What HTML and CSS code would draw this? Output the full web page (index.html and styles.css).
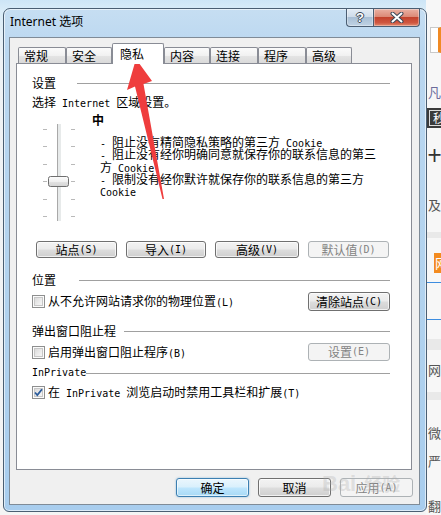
FILE: index.html
```html
<!DOCTYPE html>
<html lang="zh-CN">
<head>
<meta charset="utf-8">
<title>Internet 选项</title>
<link rel="stylesheet" href="styles.css">
</head>
<body>
<div class="desktop">
  <div class="site">
    <div class="s-box"></div>
    <div class="s-txt s-t1">凡库</div>
    <div class="s-dark"><span class="s-key">秒</span></div>
    <div class="s-txt s-t2">十</div>
    <div class="s-txt s-t3">及</div>
    <div class="s-band s-b1"></div>
    <div class="s-orange">网</div>
    <div class="s-line s-l1"></div>
    <div class="s-line s-l2"></div>
    <div class="s-band s-b2"></div>
    <div class="s-txt s-t4">网信</div>
    <div class="s-band s-b3"></div>
    <div class="s-txt s-t5">微</div>
    <div class="s-txt s-t6">严</div>
    <div class="s-txt s-t7">翻</div>
  </div>

  <div class="window">
    <div class="titlebar">
      <span class="title">Internet 选项</span>
      <div class="caption">
        <div class="cbtn help"><span class="qmark">?</span></div>
        <div class="cbtn close">
          <svg width="14" height="11" viewBox="0 0 14 11">
            <path d="M2.5 1.5 L11.5 9.5 M11.5 1.5 L2.5 9.5" stroke="#3a4656" stroke-width="4" stroke-linecap="round"/>
            <path d="M2.5 1.5 L11.5 9.5 M11.5 1.5 L2.5 9.5" stroke="#ffffff" stroke-width="2" stroke-linecap="round"/>
          </svg>
        </div>
      </div>
    </div>

    <div class="client">
      <div class="tabs">
        <div class="tab w48">常规</div>
        <div class="tab w46">安全</div>
        <div class="tab sel">隐私</div>
        <div class="tab w46">内容</div>
        <div class="tab w48">连接</div>
        <div class="tab w48">程序</div>
        <div class="tab w46">高级</div>
      </div>

      <div class="panel">
        <div class="group-h gh1"><span>设置</span><span class="rule"></span></div>
        <div class="zone">选择<span class="m"> Internet </span>区域设置。</div>
        <div class="level">中</div>
        <div class="privacy">
          <svg class="slider" width="68" height="97" viewBox="0 0 68 97">
            <g fill="#b9b9b9">
              <rect x="11" y="5" width="4" height="1"/><rect x="39" y="5" width="4" height="1"/>
              <rect x="11" y="22" width="4" height="1"/><rect x="39" y="22" width="4" height="1"/>
              <rect x="11" y="40" width="4" height="1"/><rect x="39" y="40" width="4" height="1"/>
              <rect x="11" y="57" width="4" height="1"/><rect x="39" y="57" width="4" height="1"/>
              <rect x="11" y="75" width="4" height="1"/><rect x="39" y="75" width="4" height="1"/>
              <rect x="11" y="92" width="4" height="1"/><rect x="39" y="92" width="4" height="1"/>
            </g>
            <rect x="25" y="0" width="4" height="97" fill="#e7eaea"/>
            <rect x="25" y="0" width="1" height="97" fill="#a9a9a9"/>
            <defs>
              <linearGradient id="thumb" x1="0" y1="0" x2="0" y2="1">
                <stop offset="0" stop-color="#fdfdfd"/>
                <stop offset="0.5" stop-color="#f0f0f0"/>
                <stop offset="0.55" stop-color="#e2e2e2"/>
                <stop offset="1" stop-color="#d4d4d4"/>
              </linearGradient>
            </defs>
            <rect x="16.5" y="52.5" width="20" height="10" rx="2" fill="url(#thumb)" stroke="#6f6f6f"/>
          </svg>
          <div class="desc">
            <div><span class="m">- </span>阻止没有精简隐私策略的第三方<span class="m"> Cookie</span></div>
            <div><span class="m">- </span>阻止没有经你明确同意就保存你的联系信息的第三</div>
            <div>方<span class="m"> Cookie</span></div>
            <div><span class="m">- </span>限制没有经你默许就保存你的联系信息的第三方</div>
            <div><span class="m">Cookie</span></div>
          </div>
        </div>

        <div class="btn-row">
          <div class="btn w81">站点<span class="m">(S)</span></div>
          <div class="btn w80">导入<span class="m">(I)</span></div>
          <div class="btn w84">高级<span class="m">(V)</span></div>
          <div class="btn w81 disabled">默认值<span class="m">(D)</span></div>
        </div>

        <div class="group-h gh2"><span>位置</span><span class="rule"></span></div>
        <div class="cb-row cr1">
          <span class="check"></span>
          <span class="cb-label">从不允许网站请求你的物理位置<span class="m">(L)</span></span>
          <div class="btn side h19">清除站点<span class="m">(C)</span></div>
        </div>

        <div class="group-h gh3"><span>弹出窗口阻止程</span><span class="rule"></span></div>
        <div class="cb-row cr2">
          <span class="check"></span>
          <span class="cb-label">启用弹出窗口阻止程序<span class="m">(B)</span></span>
          <div class="btn side h18 disabled">设置<span class="m">(E)</span></div>
        </div>

        <div class="group-h gh4"><span class="m">InPrivate</span><span class="rule"></span></div>
        <div class="cb-row cr3">
          <span class="check on">
            <svg width="11" height="11" viewBox="0 0 11 11"><path d="M2 5.5 L4.3 8 L9 2.2" fill="none" stroke="#2b5c9c" stroke-width="1.8"/></svg>
          </span>
          <span class="cb-label">在<span class="m"> InPrivate </span>浏览启动时禁用工具栏和扩展<span class="m">(T)</span></span>
        </div>
      </div>

      <div class="dlg-buttons">
        <div class="btn dbtn default">确定</div>
        <div class="btn dbtn">取消</div>
        <div class="btn dbtn disabled">应用<span class="m">(A)</span></div>
      </div>
    </div>
  </div>

  <svg class="arrow" width="441" height="515" viewBox="0 0 441 515">
    <polygon points="136,59 152,81 143.5,84 164,199 162.5,199 135,86.5 127,90" fill="#ef3d3d"/>
  </svg>
  <div class="watermark">Bai<span class="wm-cn">经验</span></div>
</div>
</body>
</html>
```

FILE: styles.css
```css
* { box-sizing: border-box; }
html, body { margin: 0; padding: 0; }
body {
  width: 441px;
  height: 515px;
  overflow: hidden;
  font-family: "Noto Sans CJK SC", sans-serif;
  font-size: 12px;
  color: #000;
}
.desktop {
  position: relative;
  width: 441px;
  height: 515px;
  overflow: hidden;
  background: linear-gradient(to bottom, #cde5f6 0, #d9ecf8 10px, #eef2f5 60px, #f4f4f4 100%);
}

/* background web page on the right */
.site {
  position: absolute;
  left: 426px;
  top: 0;
  width: 15px;
  height: 515px;
  background: #f7f7f7;
  display: flex;
  flex-direction: column;
  overflow: hidden;
}
.site > * { flex: none; }
.s-box { margin: 27px 0 0 4px; height: 26px; border: 1px solid #c9c9c9; border-right: 3px solid #f08a24; background: #fff; }
.s-txt { height: 14px; line-height: 14px; font-size: 13px; color: #555; padding-left: 2px; white-space: nowrap; }
.s-t1 { margin-top: 32px; color: #6b6b9b; }
.s-dark { margin-top: 9px; height: 20px; background: #3b3b3b; padding: 2px 0 0 3px; }
.s-key { display: block; width: 20px; height: 16px; border: 1px solid #ddd; color: #fff; font-size: 12px; line-height: 14px; padding-left: 3px; }
.s-t2 { margin-top: 20px; color: #333; font-weight: bold; }
.s-t3 { margin-top: 36px; }
.s-band { background: #e9e9e9; }
.s-b1 { margin-top: 20px; height: 6px; }
.s-orange { margin: 15px 0 0 8px; height: 20px; background: #f38b1f; color: #fff; font-size: 13px; line-height: 20px; padding-left: 1px; }
.s-line { height: 1px; background: #3d8de0; }
.s-l1 { margin-top: 9px; }
.s-l2 { margin-top: 36px; }
.s-b2 { margin-top: 19px; height: 11px; }
.s-t4 { margin-top: 13px; }
.s-b3 { margin-top: 15px; height: 8px; }
.s-t5 { margin-top: 26px; }
.s-t6 { margin-top: 14px; }
.s-t7 { margin-top: 31px; }

/* window */
.window {
  position: absolute;
  left: 3px;
  top: 8px;
  width: 424px;
  height: 504px;
  border: 1px solid #4a5e72;
  border-radius: 7px 7px 6px 6px;
  background: linear-gradient(to bottom, #c6def2 0%, #bad7f0 8%, #b1d2ee 60%, #a8cdee 100%);
  box-shadow: inset 0 0 0 1px rgba(255, 255, 255, 0.6);
  padding: 0 6px 6px 5px;
  display: flex;
  flex-direction: column;
}
.titlebar {
  height: 28px;
  flex: none;
  display: flex;
  justify-content: space-between;
  align-items: flex-start;
}
.title {
  font-family: "Noto Sans", "Noto Sans CJK SC", sans-serif;
  font-size: 12px;
  line-height: 14px;
  margin: 6px 0 0 1px;
  color: #000;
}
.caption { display: flex; }
.cbtn {
  height: 18px;
  border: 1px solid #4b5e73;
  border-top: none;
  display: flex;
  align-items: center;
  justify-content: center;
  box-shadow: inset 0 0 0 1px rgba(255, 255, 255, 0.35);
}
.help {
  width: 27px;
  border-right: none;
  border-bottom-left-radius: 4px;
  background: linear-gradient(to bottom, #e3ecf5 0%, #cfdcea 45%, #a9bfd5 50%, #bfd2e4 100%);
}
.qmark {
  color: #fff;
  font-family: "Liberation Sans", sans-serif;
  font-weight: bold;
  font-size: 13px;
  line-height: 13px;
  text-shadow: -1px 0 #3a4656, 1px 0 #3a4656, 0 -1px #3a4656, 0 1px #3a4656;
}
.close {
  width: 47px;
  border-bottom-right-radius: 4px;
  background: linear-gradient(to bottom, #eab1a3 0%, #dc8a77 45%, #c3432d 50%, #cf5640 80%, #e28a6e 100%);
}

/* client area */
.client {
  flex: 1;
  background: #f0f0f0;
  border: 1px solid #7f8b97;
  display: flex;
  flex-direction: column;
}
.tabs {
  height: 25px;
  flex: none;
  display: flex;
  align-items: flex-end;
  padding-left: 8px;
  position: relative;
  z-index: 1;
}
.tab {
  height: 16px;
  border: 1px solid #898c95;
  border-bottom: none;
  border-radius: 2px 2px 0 0;
  background: linear-gradient(to bottom, #fbfbfb 0%, #f1f1f1 50%, #e4e4e4 55%, #dadada 100%);
  padding-left: 5px;
  line-height: 15px;
  white-space: nowrap;
}
.w46 { width: 46px; }
.w48 { width: 48px; }
.tab.sel {
  width: 52px;
  height: 21px;
  margin-bottom: -1px;
  background: #fff;
  padding-left: 7px;
  line-height: 19px;
}

.panel {
  flex: none;
  width: 396px;
  height: 407px;
  margin-left: 6px;
  background: #fff;
  border: 1px solid #898c95;
  padding: 0 21px 0 15px;
  display: flex;
  flex-direction: column;
}

.m {
  font-family: "DejaVu Sans Mono", "Liberation Mono", monospace;
  font-size: 10px;
  line-height: 1;
}

.group-h {
  display: flex;
  align-items: center;
  height: 12px;
  line-height: 12px;
  flex: none;
  white-space: nowrap;
}
.group-h .rule {
  flex: 1;
  height: 1px;
  background: #a0a0a0;
  margin-top: 1px;
}
.gh1 { margin-top: 13px; }
.gh1 .rule { margin-left: 21px; }
.gh2 { margin-top: 16px; }
.gh2 .rule { margin-left: 23px; }
.gh3 { margin-top: 14px; }
.gh3 .rule { margin-left: 8px; }
.gh4 { margin-top: 6px; }
.gh4 .rule { margin-left: 0; }

.zone { margin-top: 7px; height: 12px; line-height: 12px; white-space: nowrap; }
.level { margin-top: 6px; height: 10px; line-height: 12px; padding-left: 60px; font-weight: bold; }

.privacy { display: flex; height: 97px; flex: none; }
.slider { flex: none; display: block; }
.desc { padding-top: 12px; line-height: 12.3px; white-space: nowrap; }
.desc > div { height: 12.3px; }

.btn {
  height: 17px;
  border: 1px solid #707070;
  border-radius: 3px;
  background: linear-gradient(to bottom, #f3f3f3 0%, #ebebeb 48%, #dddddd 52%, #cfcfcf 100%);
  box-shadow: inset 0 0 0 1px rgba(255, 255, 255, 0.7);
  display: flex;
  align-items: center;
  justify-content: center;
  line-height: 12px;
  white-space: nowrap;
  flex: none;
}
.btn.disabled {
  border-color: #adb2b5;
  background: #f4f4f4;
  color: #838383;
  box-shadow: none;
}
.btn-row { display: flex; gap: 9px; margin: 20px 0 0 4px; flex: none; }
.w80 { width: 80px; }
.w81 { width: 81px; }
.w84 { width: 84px; }

.cb-row { display: flex; align-items: center; flex: none; white-space: nowrap; line-height: 12px; }
.cr1 { margin-top: 6px; height: 19px; }
.cr2 { margin-top: 6px; height: 18px; }
.cr3 { margin-top: 7px; height: 13px; }
.check {
  width: 13px;
  height: 13px;
  flex: none;
  margin-right: 3px;
  border: 1px solid #8e8f8f;
  background: linear-gradient(135deg, #d2d2d2 0%, #eeeeee 60%, #fafafa 100%);
  box-shadow: inset 0 0 0 1px #fbfbfb, inset 0 0 0 2px #c7c7c7;
  display: flex;
  align-items: center;
  justify-content: center;
}
.check.on svg { display: block; }
.side { margin-left: auto; width: 82px; }
.h19 { height: 19px; }
.h18 { height: 18px; }

.dlg-buttons {
  display: flex;
  justify-content: flex-end;
  gap: 9px;
  margin: 8px 6px 0 0;
  flex: none;
}
.dbtn { width: 73px; height: 19px; }
.btn.default {
  border-color: #3c7fb1;
  background: linear-gradient(to bottom, #eaf6fd 0%, #d9f0fc 48%, #bee6fd 52%, #a7d9f5 100%);
  box-shadow: inset 0 0 0 1px rgba(255, 255, 255, 0.6), 0 0 2px rgba(60, 140, 200, 0.6);
}

/* overlays */
.arrow { position: absolute; left: 0; top: 0; pointer-events: none; }
.watermark {
  position: absolute;
  left: 322px;
  top: 470px;
  font-family: "Liberation Sans", sans-serif;
  font-weight: bold;
  font-size: 22px;
  line-height: 26px;
  color: rgba(170, 170, 170, 0.3);
  pointer-events: none;
}
.wm-cn { font-family: "Noto Sans CJK SC", sans-serif; font-size: 18px; margin-left: 8px; }
```
